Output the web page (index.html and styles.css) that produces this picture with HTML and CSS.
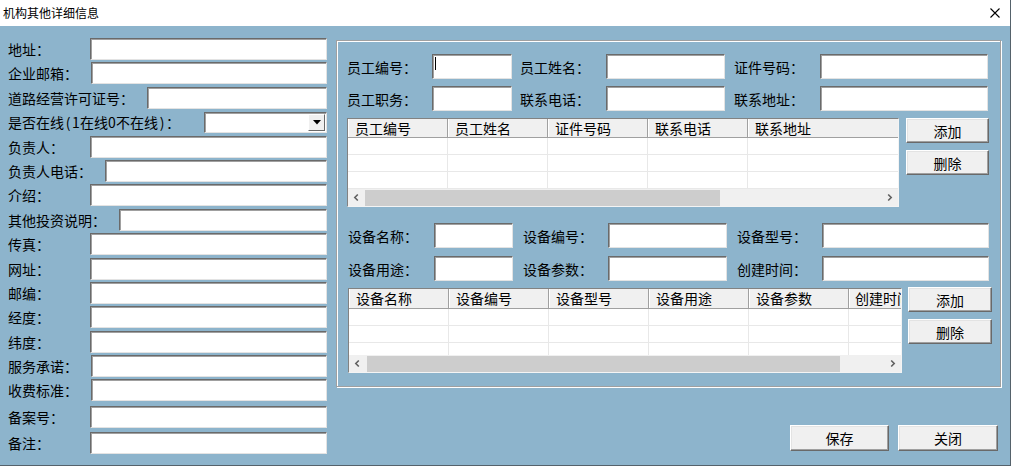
FILE: index.html
```html
<!DOCTYPE html>
<html lang="zh-CN">
<head>
<meta charset="utf-8">
<title>机构其他详细信息</title>
<link rel="stylesheet" href="styles.css">
</head>
<body>
<div class="win">
  <div class="titlebar">
    <span class="title">机构其他详细信息</span>
    <svg class="close" viewBox="0 0 10 10" width="10" height="10"><path d="M0.5 0.5 L9.5 9.5 M9.5 0.5 L0.5 9.5" stroke="#000" stroke-width="1.1" fill="none"/></svg>
  </div>
  <div class="main">
    <div class="leftcol">
      <div class="row"><span class="lbl">地址：</span><div class="tb"></div></div>
      <div class="row"><span class="lbl">企业邮箱：</span><div class="tb"></div></div>
      <div class="row"><span class="lbl">道路经营许可证号：</span><div class="tb"></div></div>
      <div class="row"><span class="lbl online">是否在线<span class="hw">(</span><span class="hw">1</span>在线<span class="hw">0</span>不在线<span class="hw">)</span>：</span>
        <div class="tb combo"><span class="dd"><svg viewBox="0 0 8 5" width="8" height="5"><path d="M0 0 H8 L4 4.5 Z" fill="#000"/></svg></span></div>
      </div>
      <div class="row"><span class="lbl">负责人：</span><div class="tb"></div></div>
      <div class="row"><span class="lbl">负责人电话：</span><div class="tb"></div></div>
      <div class="row"><span class="lbl">介绍：</span><div class="tb"></div></div>
      <div class="row"><span class="lbl">其他投资说明：</span><div class="tb"></div></div>
      <div class="row"><span class="lbl">传真：</span><div class="tb"></div></div>
      <div class="row"><span class="lbl">网址：</span><div class="tb"></div></div>
      <div class="row"><span class="lbl">邮编：</span><div class="tb"></div></div>
      <div class="row"><span class="lbl">经度：</span><div class="tb"></div></div>
      <div class="row"><span class="lbl">纬度：</span><div class="tb"></div></div>
      <div class="row"><span class="lbl">服务承诺：</span><div class="tb"></div></div>
      <div class="row"><span class="lbl">收费标准：</span><div class="tb"></div></div>
      <div class="row extra"><span class="lbl">备案号：</span><div class="tb"></div></div>
      <div class="row extra"><span class="lbl">备注：</span><div class="tb"></div></div>
    </div>

    <div class="rightcol">
      <div class="group">
        <div class="sec staff">
          <div class="fgrid fg-staff">
            <span class="flbl">员工编号：</span><div class="tb"><span class="caret"></span></div>
            <span class="flbl l2">员工姓名：</span><div class="tb"></div>
            <span class="flbl l3">证件号码：</span><div class="tb"></div>
            <span class="flbl">员工职务：</span><div class="tb"></div>
            <span class="flbl l2">联系电话：</span><div class="tb"></div>
            <span class="flbl l3">联系地址：</span><div class="tb"></div>
          </div>
          <div class="gblock">
            <div class="grid g-staff">
              <div class="ghead">
                <span>员工编号</span><span>员工姓名</span><span>证件号码</span><span>联系电话</span><span class="fill">联系地址</span>
              </div>
              <div class="gbody">
                <div class="grow"><i></i><i></i><i></i><i></i><i class="fill"></i></div>
                <div class="grow"><i></i><i></i><i></i><i></i><i class="fill"></i></div>
                <div class="grow"><i></i><i></i><i></i><i></i><i class="fill"></i></div>
              </div>
              <div class="hscroll">
                <span class="thumb t-staff"></span>
                <svg class="arr" viewBox="0 0 17 17" width="17" height="17"><path d="M9.8 5.5 L6.8 8.5 L9.8 11.5" stroke="#606060" stroke-width="1.6" fill="none"/></svg>
                <svg class="arr" viewBox="0 0 17 17" width="17" height="17"><path d="M7.2 5.5 L10.2 8.5 L7.2 11.5" stroke="#606060" stroke-width="1.6" fill="none"/></svg>
              </div>
            </div>
            <div class="btns">
              <div class="btn">添加</div>
              <div class="btn">删除</div>
            </div>
          </div>
        </div>

        <div class="sec equip">
          <div class="fgrid fg-equip">
            <span class="flbl">设备名称：</span><div class="tb"></div>
            <span class="flbl l2">设备编号：</span><div class="tb"></div>
            <span class="flbl l2">设备型号：</span><div class="tb"></div>
            <span class="flbl">设备用途：</span><div class="tb"></div>
            <span class="flbl l2">设备参数：</span><div class="tb"></div>
            <span class="flbl l2">创建时间：</span><div class="tb"></div>
          </div>
          <div class="gblock eq">
            <div class="grid g-equip">
              <div class="ghead">
                <span>设备名称</span><span>设备编号</span><span>设备型号</span><span>设备用途</span><span>设备参数</span><span class="last">创建时间</span>
              </div>
              <div class="gbody">
                <div class="grow"><i></i><i></i><i></i><i></i><i></i><i></i></div>
                <div class="grow"><i></i><i></i><i></i><i></i><i></i><i></i></div>
                <div class="grow"><i></i><i></i><i></i><i></i><i></i><i></i></div>
              </div>
              <div class="hscroll">
                <span class="thumb t-equip"></span>
                <svg class="arr" viewBox="0 0 17 17" width="17" height="17"><path d="M9.8 5.5 L6.8 8.5 L9.8 11.5" stroke="#606060" stroke-width="1.6" fill="none"/></svg>
                <svg class="arr" viewBox="0 0 17 17" width="17" height="17"><path d="M7.2 5.5 L10.2 8.5 L7.2 11.5" stroke="#606060" stroke-width="1.6" fill="none"/></svg>
              </div>
            </div>
            <div class="btns eq">
              <div class="btn">添加</div>
              <div class="btn">删除</div>
            </div>
          </div>
        </div>
      </div>

      <div class="footer">
        <div class="btn big">保存</div>
        <div class="btn big wide">关闭</div>
      </div>
    </div>
  </div>
</div>
</body>
</html>
```

FILE: styles.css
```css
* { box-sizing: border-box; }
html, body { margin: 0; padding: 0; }
body {
  font-family: "Noto Sans CJK SC", "Microsoft YaHei", sans-serif;
  font-size: 14px;
  color: #000;
  background: #8db4cc;
}
.win {
  width: 1011px;
  height: 466px;
  background: #8db4cc;
  display: flex;
  flex-direction: column;
  border-right: 1px solid #55626b;
  border-bottom: 1px solid #55626b;
  overflow: hidden;
}
.titlebar {
  height: 26px;
  flex: none;
  background: #fff;
  display: flex;
  align-items: center;
  justify-content: space-between;
  padding: 0 10px 0 3px;
}
.title { font-size: 12px; line-height: 26px; }
.close { display: block; }

.main {
  flex: 1;
  display: flex;
  gap: 9px;
  padding: 12px 0 0 8px;
}

/* left column */
.leftcol {
  width: 319px;
  flex: none;
  display: flex;
  flex-direction: column;
  gap: 2.4px;
}
.row { display: flex; align-items: center; height: 22px; flex: none; }
.row.extra { margin-top: 2px; }
.lbl {
  flex: none;
  min-width: 69px;
  margin-right: 13px;
  line-height: 22px;
  white-space: nowrap;
}
.lbl.online { width: 183px; }
.hw { display: inline-block; width: 8px; text-align: center; }

.tb {
  flex: 1;
  height: 22px;
  background: #fff;
  border-top: 1px solid #6a6a6a;
  border-left: 1px solid #6a6a6a;
  border-right: 1px solid #e3e3e3;
  border-bottom: 1px solid #e3e3e3;
  box-shadow: inset 1px 1px 0 #a0a0a0;
  position: relative;
}
.combo { height: 21px; display: flex; justify-content: flex-end; align-items: center; padding-right: 1px; }
.dd {
  width: 17px;
  height: 17px;
  background: #f0f0f0;
  border-top: 1px solid #fff;
  border-left: 1px solid #fff;
  border-right: 1px solid #696969;
  border-bottom: 1px solid #696969;
  display: flex;
  align-items: center;
  justify-content: center;
}
.dd svg { display: block; }

/* right column */
.rightcol {
  width: 665px;
  flex: none;
  display: flex;
  flex-direction: column;
}
.group {
  margin-top: 2px;
  height: 347px;
  border: 1px solid #a0a0a0;
  box-shadow: inset 1px 1px 0 #fff, 1px 1px 0 #fff;
  padding: 13px 0 0 10px;
}
.fgrid {
  display: grid;
  grid-auto-rows: 25px;
  row-gap: 7px;
  align-items: center;
}
.fg-staff { grid-template-columns: 85px 80px 94px 119px 95px 168px; }
.fg-staff .l2 { padding-left: 8px; }
.fg-staff .l3 { padding-left: 9px; }
.fgrid .tb { height: 25px; }
.flbl { white-space: nowrap; line-height: 25px; padding-top: 2px; }

.equip { margin-top: 16px; padding-left: 1px; }
.fg-equip { grid-template-columns: 86px 79px 95px 119px 95px 167px; row-gap: 8px; }
.fg-equip .l2 { padding-left: 10px; }

.caret {
  position: absolute;
  left: 2px;
  top: 2px;
  width: 1px;
  height: 13px;
  background: #000;
}

.gblock { display: flex; gap: 7px; margin-top: 7px; align-items: flex-start; }
.gblock.eq { gap: 6px; }

.grid {
  display: flex;
  flex-direction: column;
  background: #fff;
  border-top: 1px solid #828282;
  border-left: 1px solid #828282;
  border-right: 1px solid #f4f4f4;
  border-bottom: 1px solid #f4f4f4;
  overflow: hidden;
}
.g-staff { width: 552px; height: 89px; }
.g-equip { width: 554px; height: 85px; }

.ghead {
  display: flex;
  flex: none;
  height: 19px;
  background: #f0f0f0;
  border-bottom: 1px solid #a0a0a0;
}
.g-equip .ghead { height: 20px; }
.ghead span {
  flex: none;
  width: 100px;
  border-right: 1px solid #a0a0a0;
  box-shadow: inset 1px 0 0 #fff;
  padding-left: 7px;
  line-height: 18px;
  white-space: nowrap;
  overflow: hidden;
}
.ghead span.fill { flex: 1; border-right: none; }
.ghead span.last { width: 52px; padding-left: 6px; border-right: none; }

.gbody { flex: 1; overflow: hidden; }
.grow { display: flex; height: 17px; border-bottom: 1px solid #e8e8e8; }
.grow i { flex: none; width: 100px; border-right: 1px solid #e8e8e8; }
.grow i.fill { flex: 1; border-right: none; }

.hscroll {
  flex: none;
  height: 17px;
  background: #f0f0f0;
  position: relative;
  display: flex;
  justify-content: space-between;
  align-items: center;
}
.arr { display: block; position: relative; }
.thumb { position: absolute; top: 1px; bottom: 0; background: #cdcdcd; }
.t-staff { left: 17px; width: 355px; }
.t-equip { left: 18px; width: 473px; }

.btns { display: flex; flex-direction: column; gap: 7px; width: 83px; flex: none; }
.btns.eq { width: 84px; margin-top: -1px; }
.btn {
  height: 25px;
  background: #f0f0f0;
  border-top: 1px solid #fff;
  border-left: 1px solid #fff;
  border-right: 1px solid #696969;
  border-bottom: 1px solid #696969;
  box-shadow: inset -1px -1px 0 #a0a0a0, inset 1px 1px 0 #e3e3e3;
  display: flex;
  align-items: center;
  justify-content: center;
  line-height: 20px;
}

.footer {
  display: flex;
  justify-content: flex-end;
  gap: 9px;
  margin-top: 38px;
  padding-right: 3px;
}
.btn.big { width: 99px; height: 26px; }
.btn.big.wide { width: 100px; }
```
